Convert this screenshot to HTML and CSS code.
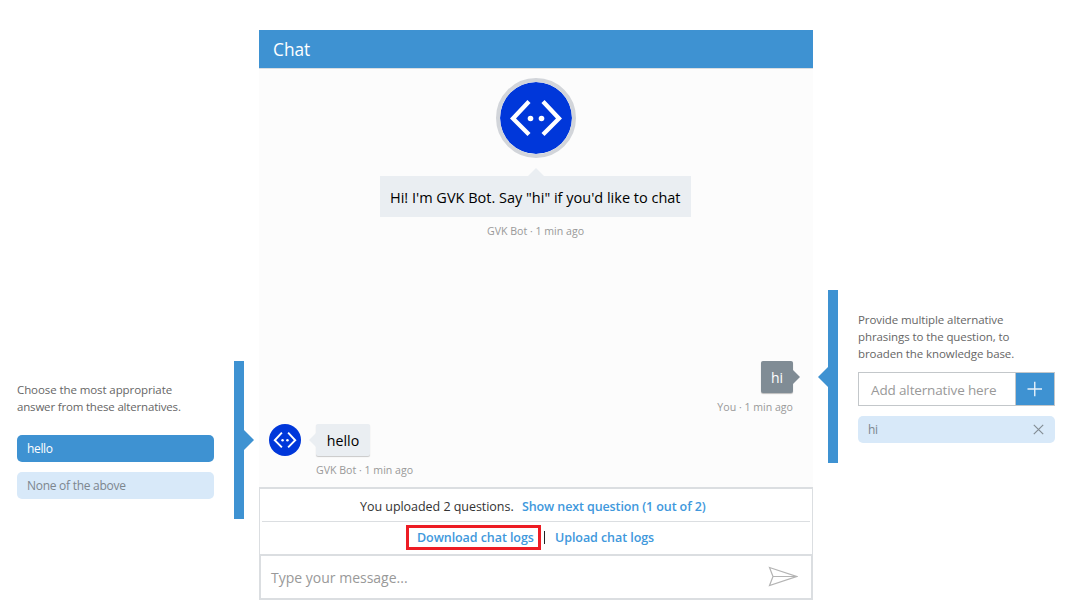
FILE: index.html
```html
<!DOCTYPE html>
<html lang="en">
<head>
<meta charset="utf-8">
<title>Chat</title>
<link rel="stylesheet" href="styles.css">
</head>
<body>
<svg class="defs" width="0" height="0">
  <symbol id="bot" viewBox="0 0 72 72">
    <circle cx="36" cy="36" r="36" fill="#0037da"/>
    <path d="M29 19.500 13 36.500l16 16M43 19.500 59 36.500l-16 16" fill="none" stroke="#fff" stroke-width="4.300"/>
    <circle cx="30.500" cy="36.500" r="2.800" fill="#fff"/>
    <circle cx="41.500" cy="36.500" r="2.800" fill="#fff"/>
  </symbol>
</svg>
<div class="page">
  <aside class="answers">
    <div class="answers-body">
      <p class="hint">Choose the most appropriate<br><span class="hint-b">answer from these alternatives.</span></p>
      <div class="chip chip-on"><span>hello</span></div>
      <div class="chip"><span class="none">None of the above</span></div>
    </div>
    <div class="bar bar-left"></div>
  </aside>
  <main class="chat">
    <header class="chat-head"><span>Chat</span></header>
    <section class="log">
      <div class="intro">
        <svg class="avatar-big"><use href="#bot"/></svg>
        <div class="bubble-intro"><span>Hi! I'm GVK Bot. Say "hi" if you'd like to chat</span></div>
        <div class="meta">GVK Bot · 1 min ago</div>
      </div>
      <div class="mine">
        <div class="bubble-mine">hi</div>
        <div class="meta">You · 1 min ago</div>
      </div>
      <div class="reply">
        <svg class="avatar-small"><use href="#bot"/></svg>
        <div>
          <div class="bubble-bot">hello</div>
          <div class="meta">GVK Bot · 1 min ago</div>
        </div>
      </div>
    </section>
    <section class="tools">
      <div class="tool-row first"><span class="uploaded">You uploaded 2 questions.</span><a class="next">Show next question (1 out of 2)</a></div>
      <div class="tool-row second"><a class="download"><span>Download chat logs</span></a><i class="sep"></i><a class="upload">Upload chat logs</a></div>
    </section>
    <div class="composer">
      <span class="type">Type your message...</span>
      <svg class="send" viewBox="0 0 30 22"><path d="M1.500 1.500 28.500 10.500 1.500 19.500 5 10.500ZM5 10.500H28" fill="none" stroke="#b4b4b4" stroke-width="1.200"/></svg>
    </div>
  </main>
  <aside class="phrases">
    <div class="bar bar-right"></div>
    <div class="phrases-body">
      <p class="hint"><span class="p1">Provide multiple alternative</span><br><span class="p2">phrasings to the question, to</span><br><span class="p3">broaden the knowledge base.</span></p>
      <div class="add"><span class="add-text">Add alternative here</span><span class="plus"><svg width="38" height="32" viewBox="0 0 38 32"><path d="M11.500 16H26M18.750 8.800V23.200" stroke="#e6f1fa" stroke-width="1.400"/></svg></span></div>
      <div class="chip"><span>hi</span><svg class="close" width="11" height="11" viewBox="0 0 11 11"><path d="M.8.8 10.200 10.200M10.200.8.8 10.200" stroke="#848d95" stroke-width="1.200"/></svg></div>
    </div>
  </aside>
</div>
</body>
</html>
```
FILE: styles.css
```css
* { box-sizing: border-box; }
body { margin: 0; background: #fff; font-family: "Open Sans", "Noto Sans", sans-serif; overflow: hidden; }
.defs { display: block; }
svg { flex: none; display: block; }
.page { display: flex; width: 1076px; height: 613px; white-space: nowrap; }
.answers { display: flex; width: 259px; padding: 361px 0 0 17px; }
.answers-body { width: 197px; padding-top: 20px; margin-right: 20px; }
.bar { width: 10px; background: #3e92d2; position: relative; flex: none; }
.bar-left { height: 158px; }
.bar-left::after { content: ""; position: absolute; left: 10px; top: 69px; border: 10px solid transparent; border-left-color: #3e92d2; border-right: 0; }
.bar-right { height: 173px; }
.bar-right::before { content: ""; position: absolute; right: 10px; top: 77px; border: 10px solid transparent; border-right-color: #3e92d2; border-left: 0; }
.hint { margin: 0; font-size: 11.5px; line-height: 17px; letter-spacing: -.09px; color: #666; }
.hint-b { letter-spacing: -.18px; }
.chip { display: flex; align-items: center; justify-content: space-between; height: 27px; margin-top: 10px; padding: 0 11px 0 10px; border-radius: 5px; background: #d8e9f9; color: #7c868e; font-size: 12px; letter-spacing: -.27px; }
.chip-on { margin-top: 20px; background: #3e92d2; color: #fff; }
.chip-on span { letter-spacing: -.35px; }
.chat { width: 554px; padding-top: 30px; }
.chat-head { height: 38px; padding-left: 14px; background: #3e92d2; color: #fff; font-size: 17.3px; line-height: 40px; }
.log { height: 419px; border-top: 1px solid #d9dde1; background: #fcfcfc; padding-top: 9px; }
.intro { display: flex; flex-direction: column; align-items: center; height: 283px; }
.avatar-big { width: 80px; height: 80px; border: 4px solid #d2d5da; border-radius: 50%; }
.bubble-intro { position: relative; width: 311px; height: 41px; margin: 18px 1px 0 0; padding-left: 10px; line-height: 43px; font-size: 14.5px; background: #eaeef2; color: #000; }
.bubble-intro::before { content: ""; position: absolute; left: 148px; top: -8px; border: 8px solid transparent; border-bottom-color: #eaeef2; border-top: 0; }
.meta { font-size: 10.6px; line-height: 14px; color: #999; }
.intro .meta { margin: 7px 1px 0 0; }
.mine { display: flex; flex-direction: column; align-items: flex-end; height: 63px; padding-right: 20px; }
.bubble-mine { position: relative; width: 32px; height: 32px; border-radius: 2px; background: #808c95; color: #fff; font-size: 14px; line-height: 33px; text-align: center; box-shadow: 0 1px 1px #bbb; }
.bubble-mine::after { content: ""; position: absolute; left: 32px; top: 9px; border: 7px solid transparent; border-left-color: #808c95; border-right: 0; }
.mine .meta { margin-top: 7px; }
.reply { display: flex; padding-left: 10px; }
.avatar-small { width: 32px; height: 32px; margin-right: 15px; }
.bubble-bot { position: relative; width: 54px; height: 32px; border-radius: 2px; background: #eaeef2; color: #000; font-size: 14.2px; line-height: 33px; text-align: center; box-shadow: 0 1px 1px #c8c8c8; }
.bubble-bot::before { content: ""; position: absolute; left: -7px; top: 9px; border: 7px solid transparent; border-right-color: #eaeef2; border-left: 0; }
.reply .meta { margin-top: 7px; }
.tools { height: 67px; border: 1px solid #dbdee1; border-top-width: 2px; border-bottom: 0; padding: 0 2px; font-size: 12.5px; }
.tool-row { display: flex; align-items: center; }
.first { border-bottom: 1px solid #dbdee1; height: 33px; padding: 3px 0 0 98px; }
.second { height: 31px; padding-left: 144px; }
.uploaded { width: 162px; color: #333; letter-spacing: -.04px; }
.tools a { color: #4098dc; font-weight: 600; letter-spacing: -.07px; }
.tools .next { letter-spacing: -.11px; }
.download { width: 135px; height: 25px; border: 3px solid #ed1c24; padding-left: 8px; line-height: 19px; }
.sep { width: 1px; height: 13px; margin: 0 10px 0 3px; background: #222; }
.composer { display: flex; align-items: center; justify-content: space-between; height: 46px; border: 2px solid #dbdee1; padding: 0 13px 0 10px; font-size: 14px; color: #999; }
.send { width: 30px; height: 22px; }
.phrases { display: flex; width: 263px; padding: 290px 21px 0 15px; }
.phrases-body { width: 197px; padding-top: 21px; margin-left: 20px; }
.add { display: flex; height: 34px; margin-top: 10px; border: 1px solid #c3c7ca; color: #999; font-size: 13.5px; line-height: 34px; letter-spacing: -.14px; }
.add-text { width: 157px; padding-left: 12px; border-right: 1px solid #c3c7ca; }
.plus { width: 38px; background: #3e92d2; }
```
